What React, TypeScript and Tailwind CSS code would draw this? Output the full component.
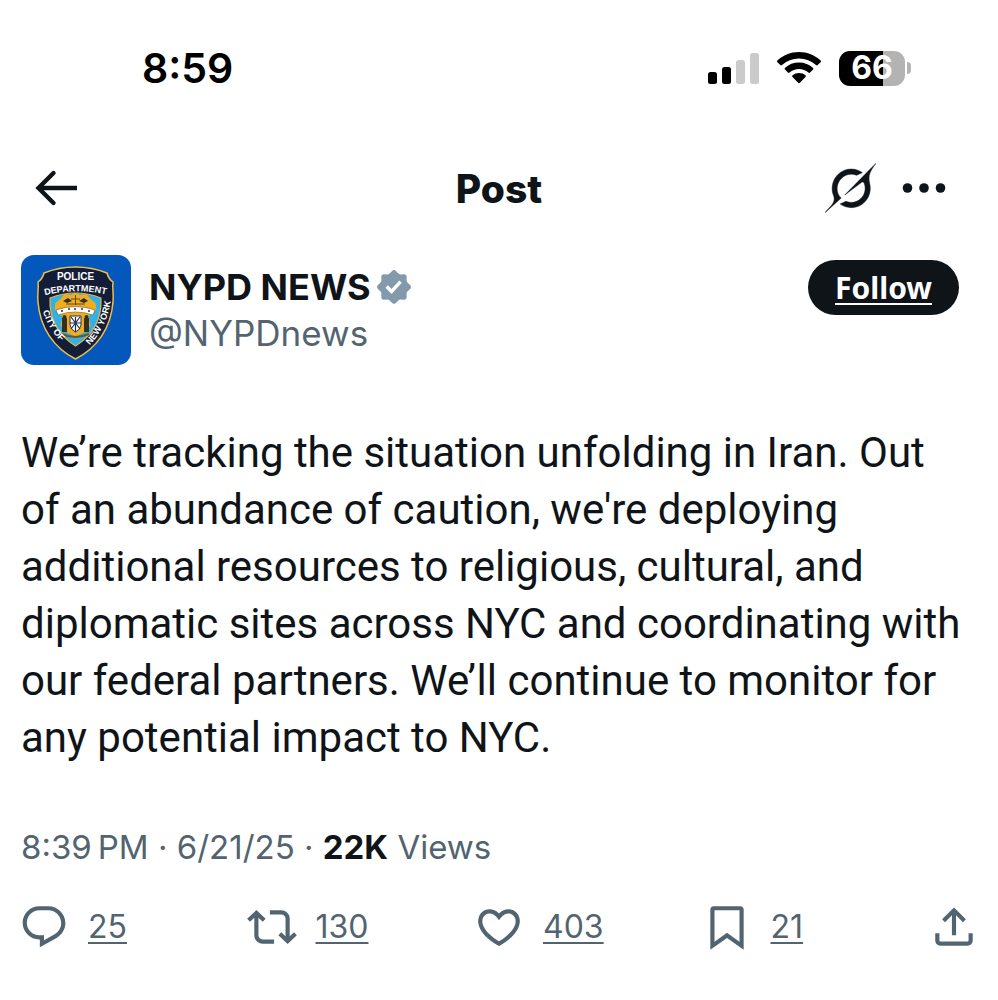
import React from 'react';

const BODY = [
  'We’re tracking the situation unfolding in Iran. Out',
  "of an abundance of caution, we're deploying",
  'additional resources to religious, cultural, and',
  'diplomatic sites across NYC and coordinating with',
  'our federal partners. We’ll continue to monitor for',
  'any potential impact to NYC.',
];

const actions = [
  {
    label: 'Reply',
    count: 25,
    d: 'M1.751 10c0-4.42 3.584-8 8.005-8h4.366c4.49 0 8.129 3.64 8.129 8.13 0 2.96-1.607 5.68-4.196 7.11l-8.054 4.46v-3.69h-.067c-4.49.1-8.183-3.51-8.183-8.01zm8.005-6c-3.317 0-6.005 2.69-6.005 6 0 3.37 2.77 6.08 6.138 6.01l.351-.01h1.761v2.3l5.087-2.81c1.951-1.08 3.163-3.13 3.163-5.36 0-3.39-2.744-6.13-6.129-6.13H9.756z',
  },
  {
    label: 'Repost',
    count: 130,
    d: 'M4.5 3.88l4.432 4.14-1.364 1.46L5.5 7.55V16c0 1.1.896 2 2 2H13v2H7.5c-2.209 0-4-1.79-4-4V7.55L1.432 9.48.068 8.02 4.5 3.88zM16.5 6H11V4h5.5c2.209 0 4 1.79 4 4v8.45l2.068-1.93 1.364 1.46-4.432 4.14-4.432-4.14 1.364-1.46 2.068 1.93V8c0-1.1-.896-2-2-2z',
  },
  {
    label: 'Like',
    count: 403,
    d: 'M16.697 5.5c-1.222-.06-2.679.51-3.89 2.16l-.805 1.09-.806-1.09C9.984 6.01 8.526 5.44 7.304 5.5c-1.243.07-2.349.78-2.91 1.91-.552 1.12-.633 2.78.479 4.82 1.074 1.97 3.257 4.27 7.129 6.61 3.87-2.34 6.052-4.64 7.126-6.61 1.111-2.04 1.03-3.7.477-4.82-.561-1.13-1.666-1.84-2.908-1.91zm4.187 7.69c-1.351 2.48-4.001 5.12-8.379 7.67l-.503.3-.504-.3c-4.379-2.55-7.029-5.19-8.382-7.67-1.36-2.5-1.41-4.86-.514-6.67.887-1.79 2.647-2.91 4.601-3.01 1.651-.09 3.368.56 4.798 2.01 1.429-1.45 3.146-2.1 4.796-2.01 1.954.1 3.714 1.22 4.601 3.01.896 1.81.846 4.17-.514 6.67z',
  },
  {
    label: 'Bookmark',
    count: 21,
    d: 'M4 3.5C4 2.67 4.67 2 5.5 2h13c.83 0 1.5.67 1.5 1.5v19.44l-8-5.71-8 5.71V3.5zM6 4v15.06l6-4.29 6 4.29V4H6z',
  },
];

const StatusIcons: React.FC = () => (
  <div className="flex items-center">
    <svg className="w-[52px] h-8" viewBox="0 0 52 32" aria-hidden="true">
      <rect x="0" y="20" width="9" height="12" rx="2.5" fill="#000" />
      <rect x="14" y="15" width="9" height="17" rx="2.5" fill="#000" />
      <rect x="28" y="8" width="9" height="24" rx="2.5" fill="#cbcbcb" />
      <rect x="42" y="1" width="9" height="31" rx="2.5" fill="#cbcbcb" />
    </svg>
    <svg className="w-[46px] h-8 ml-4" viewBox="0 0 46 32" aria-hidden="true">
      <path d="M23 0c8.3 0 15.900 3.200 21.600 8.400.5.5.5 1.300 0 1.800l-2.900 2.900c-.5.5-1.200.5-1.700 0A25 25 0 0 0 23 6.500 25 25 0 0 0 6 13.100c-.5.5-1.200.5-1.700 0l-2.900-2.900c-.5-.5-.5-1.300 0-1.800C7.100 3.200 14.700 0 23 0z" />
      <path d="M23 10.500c5.400 0 10.300 2 14 5.400.5.5.5 1.200 0 1.700l-2.900 2.900c-.5.5-1.200.5-1.700 0A14.500 14.500 0 0 0 23 17c-3.600 0-6.800 1.300-9.400 3.500-.5.5-1.200.5-1.700 0L9 17.600c-.5-.5-.5-1.200 0-1.700a20.700 20.700 0 0 1 14-5.400z" />
      <path d="M23 21c2.500 0 4.700.9 6.400 2.300.6.5.6 1.200.1 1.700l-5.600 5.800c-.5.5-1.300.5-1.800 0L16.500 25c-.5-.5-.5-1.200.1-1.700A10 10 0 0 1 23 21z" />
    </svg>
    <div className="flex items-center ml-[17px]">
      <div className="w-[66px] h-[35px] rounded-[11px] bg-linear-to-r from-black from-66% to-[#b3b3b3] to-66% flex items-center justify-center text-white text-[32px] leading-none font-bold">
        66
      </div>
      <div className="w-1 h-3 ml-[2px] rounded-r-full bg-[#b3b3b3]" />
    </div>
  </div>
);

const Avatar: React.FC = () => (
  <svg className="w-[110px] h-[110px] shrink-0 rounded-[13px]" viewBox="0 0 110 110" role="img" aria-label="NYPD shield">
    <defs>
      <path id="arcDept" d="M18 42Q54.500 31 91 41" />
      <path id="arcCity" d="M20 48Q24 73 46 92" />
      <path id="arcYork" d="M67 92Q86 73 90 44" />
    </defs>
    <rect width="110" height="110" fill="#0457bb" />
    <path d="M54.500 12C66 12 76 14 86 18C87 22 89 25 92 27C91 33 93 39 92 47C90 73 76 93 54.500 104C33 93 19 73 17 47C16 39 18 33 17 27C20 25 22 22 23 18C33 14 43 12 54.500 12z" fill="#141d38" stroke="#f0c04a" strokeWidth="1.500" />
    <path d="M29 43Q54.500 33 80 43C81 65 72 80 54.500 91C37 80 28 65 29 43z" fill="#32b0e8" stroke="#e5b23c" strokeWidth="1.200" />
    <path d="M54.500 38l4 2 7-1 4 5 5 4 1 6-5 4-3 4 2 8-4 6-11 6-11-6-4-6 2-8-3-4-5-4 1-6 5-4 4-5 7 1z" fill="#f1ad20" />
    <path d="M42 46l5-3 4 3-5 2zM58 46l5-3 4 3-4 2zM41 63h5v14h-5zM63 63h5v14h-5z" fill="#36301f" />
    <circle cx="43.500" cy="62" r="2" fill="#36301f" />
    <circle cx="65.500" cy="62" r="2" fill="#36301f" />
    <path d="M50 44h9M54.500 40v10M45 49h19" stroke="#5d481c" strokeWidth="1" />
    <path d="M35 55Q54.500 48 74 55l-2 5Q54.500 54 37 60z" fill="#fff" stroke="#71551c" strokeWidth=".6" />
    <path d="M41 55v2M48 53v2M54 53v2M61 53v2M68 55v2" stroke="#26324c" strokeWidth="1.500" />
    <path d="M49 61h11v9q-1 5-5.500 7Q50 75 49 70z" fill="#fff" stroke="#26324c" />
    <path d="M50 62l9 12M59 62l-9 12M54.500 62v15M49 68h11" stroke="#26324c" strokeWidth="1.200" />
    <path d="M41 79q13 6 27 0" stroke="#76511b" strokeWidth="2" fill="none" />
    <g fill="#fff" fontFamily="'Liberation Sans', Arial, sans-serif" fontWeight="700">
      <text x="54.500" y="25" textAnchor="middle" fontSize="10">POLICE</text>
      <text fontSize="9"><textPath href="#arcDept" startOffset="50%" textAnchor="middle">DEPARTMENT</textPath></text>
      <text fontSize="9"><textPath href="#arcCity" startOffset="50%" textAnchor="middle">CITY OF</textPath></text>
      <text fontSize="9"><textPath href="#arcYork" startOffset="50%" textAnchor="middle">NEW YORK</textPath></text>
    </g>
  </svg>
);

const App: React.FC = () => (
  <div className="bg-white text-[#0f1419] font-['Inter',sans-serif]">
    <div className="h-[136px] pl-[142px] pr-[87px] flex items-center justify-between">
      <span className="text-[41px] leading-none font-semibold text-black">8:59</span>
      <StatusIcons />
    </div>

    <header className="h-[104px] px-[34px] grid grid-cols-[1fr_auto_1fr] items-center">
      <button aria-label="Back" className="w-11 h-11">
        <svg className="w-11 h-11" viewBox="0 0 44 44" fill="none" stroke="currentColor" strokeWidth="4.400" strokeLinecap="round">
          <path d="M19.500 7L4.500 22l15 15" strokeLinejoin="miter" />
          <path d="M5 22h38" strokeLinecap="butt" />
        </svg>
      </button>
      <h1 className="text-[39px] leading-none font-extrabold">Post</h1>
      <div className="flex items-center justify-end gap-[26px] pr-[18px]">
        <button aria-label="Ask Grok">
          <svg className="w-[51px] h-[50px]" viewBox="0 0 33 32" fill="currentColor" stroke="currentColor" strokeWidth=".3">
            <path d="M12.745 20.540l10.970-8.190c.539-.4 1.307-.244 1.564.380 1.349 3.288.746 7.241-1.938 9.955-2.683 2.714-6.417 3.310-9.830 1.954l-3.728 1.745c5.347 3.697 11.840 2.782 15.898-1.324 3.219-3.255 4.216-7.692 3.284-11.693l.008.009c-1.351-5.878.332-8.227 3.782-13.031L33 0l-4.540 4.590v-.014L12.743 20.544m-2.263 1.987c-3.837-3.707-3.175-9.446.1-12.755 2.420-2.449 6.388-3.448 9.852-1.979l3.720-1.737c-.67-.49-1.530-1.017-2.515-1.387-4.455-1.854-9.789-.931-13.410 2.728-3.483 3.523-4.579 8.940-2.697 13.561 1.405 3.454-.899 5.898-3.220 8.364C1.490 30.200.666 31.074 0 32l10.478-9.466" />
          </svg>
        </button>
        <button aria-label="More">
          <svg className="w-11 h-11" viewBox="0 0 44 44" fill="currentColor">
            <circle cx="5.500" cy="22" r="4.800" />
            <circle cx="22" cy="22" r="4.800" />
            <circle cx="38.500" cy="22" r="4.800" />
          </svg>
        </button>
      </div>
    </header>

    <main>
      <article className="pt-[15px]">
        <div className="px-[21px] flex items-start">
          <Avatar />
          <div className="ml-[18px] pt-[9px] flex-1">
            <div className="flex items-center gap-[5px]">
              <span className="text-[36px] leading-[46px] font-bold">NYPD NEWS</span>
              <svg className="w-9 h-9" viewBox="1 1 20 20" role="img" aria-label="Verified">
                <path fill="#829aab" d="M12.050 2.056c-.568-.608-1.532-.608-2.100 0l-1.393 1.490c-.284.303-.685.470-1.100.455L5.420 3.932c-.832-.028-1.514.654-1.486 1.486l.069 2.039c.014.415-.152.816-.456 1.100l-1.490 1.392c-.608.568-.608 1.533 0 2.101l1.490 1.393c.304.284.470.684.456 1.100l-.070 2.038c-.027.832.655 1.514 1.487 1.486l2.038-.069c.415-.014.816.152 1.100.455l1.392 1.490c.569.609 1.533.609 2.102 0l1.393-1.490c.283-.303.684-.470 1.099-.455l2.038.069c.832.028 1.515-.654 1.486-1.486L18 14.542c-.015-.415.152-.815.455-1.099l1.490-1.393c.608-.568.608-1.533 0-2.101l-1.490-1.393c-.303-.283-.470-.684-.455-1.100l.068-2.038c.029-.832-.654-1.514-1.486-1.486l-2.038.070c-.415.013-.816-.153-1.100-.456z" />
                <path fill="none" stroke="#fff" strokeWidth="1.900" d="M6.900 10.750l2.750 2.750 5-5.500" />
              </svg>
            </div>
            <div className="text-[35px] leading-[46px] text-[#536471]">@NYPDnews</div>
          </div>
          <button className="mt-[5px] mr-[18px] px-[27px] h-[55px] rounded-full bg-[#0f1419] text-white font-['Noto_Sans',sans-serif] text-[30px] leading-none font-bold underline decoration-2 underline-offset-4">
            Follow
          </button>
        </div>

        <p className="mt-[59px] px-[21px] text-[42px] leading-[57px] whitespace-pre-line font-['Roboto',sans-serif]">
          {BODY.join('\n')}
        </p>

        <div className="mt-[56px] px-[21px] text-[33px] leading-[50px] text-[#536471]">
          <time>8:39{'\u202f'}PM · 6/21/25</time> · <strong className="font-bold text-[#0f1419]">22K</strong> Views
        </div>

        <div className="mt-[30px] px-[19px] grid grid-cols-[repeat(4,1fr)_50px] items-center text-[#536471]">
          {actions.map((a) => (
            <button key={a.label} aria-label={`${a.label} ${a.count}`} className="flex items-center gap-[19px]">
              <svg className="w-[50px] h-[50px]" viewBox="0 0 24 24" fill="currentColor">
                <path d={a.d} />
              </svg>
              <span className="text-[32px] leading-[40px] underline decoration-2 underline-offset-4">{a.count}</span>
            </button>
          ))}
          <button aria-label="Share">
            <svg className="w-[50px] h-[50px]" viewBox="0 0 24 24" fill="currentColor">
              <path d="M12 2.590l5.700 5.700-1.410 1.420L13 6.410V16h-2V6.410l-3.300 3.300-1.410-1.420L12 2.590zM21 15l-.020 3.510c0 1.380-1.120 2.490-2.500 2.490H5.500C4.110 21 3 19.880 3 18.500V15h2v3.500c0 .280.220.5.5.5h12.980c.280 0 .5-.220.5-.5L19 15h2z" />
            </svg>
          </button>
        </div>
      </article>
    </main>
  </div>
);

export default App;
